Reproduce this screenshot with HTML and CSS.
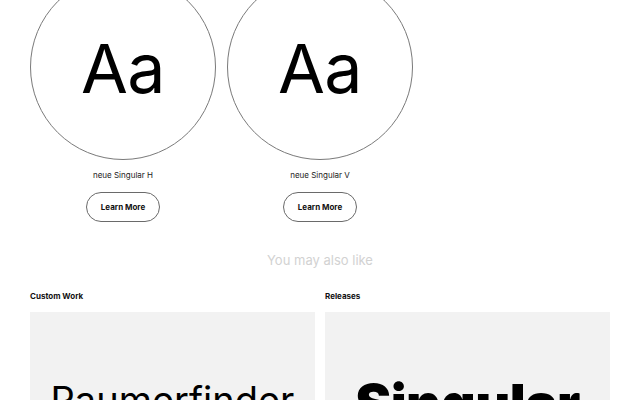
FILE: index.html
```html
<!DOCTYPE html>
<html>
<head>
<meta charset="utf-8">
<link rel="stylesheet" href="styles.css">
</head>
<body>
<main class="page">
  <section class="fonts">
    <div class="font-item">
      <div class="circle"><span class="sample">Aa</span></div>
      <p class="font-name">neue Singular H</p>
      <a class="btn" href="#">Learn More</a>
    </div>
    <div class="font-item">
      <div class="circle"><span class="sample">Aa</span></div>
      <p class="font-name">neue Singular V</p>
      <a class="btn" href="#">Learn More</a>
    </div>
  </section>
  <h2 class="also">You may also like</h2>
  <section class="related">
    <div class="rel">
      <h3 class="rel-title">Custom Work</h3>
      <div class="card"><span class="card-text light">Raumerfinder</span></div>
    </div>
    <div class="rel">
      <h3 class="rel-title">Releases</h3>
      <div class="card"><span class="card-text heavy">Singular</span></div>
    </div>
  </section>
</main>
</body>
</html>
```
FILE: styles.css
```css
* { box-sizing: border-box; }
html, body { margin: 0; padding: 0; background: #fff; }
body {
  font-family: Inter, "Liberation Sans", sans-serif;
  color: #111;
  overflow: hidden;
}
.page {
  padding: 0 30px;
}
.fonts {
  display: grid;
  grid-template-columns: repeat(3, 1fr);
  column-gap: 11px;
  margin-top: -26px;
}
.font-item {
  display: flex;
  flex-direction: column;
  align-items: center;
}
.circle {
  width: 100%;
  aspect-ratio: 1 / 1;
  border: 1px solid #7a7a7a;
  border-radius: 50%;
  display: flex;
  align-items: center;
  justify-content: center;
}
.sample {
  font-size: 68px;
  line-height: 1;
  font-weight: 400;
  color: #000;
  letter-spacing: -0.5px;
  margin-top: 2px;
}
.font-name {
  margin: 10px 0 0;
  font-size: 8px;
  line-height: 10px;
  color: #222;
}
.btn {
  margin-top: 12px;
  height: 30px;
  width: 74px;
  border: 1px solid #6a6a6a;
  border-radius: 15px;
  display: flex;
  align-items: center;
  justify-content: center;
  font-size: 8px;
  font-weight: 700;
  color: #111;
  text-decoration: none;
}
.also {
  margin: 30px 0 0;
  text-align: center;
  font-size: 13px;
  line-height: 16px;
  font-weight: 400;
  color: #d2d2d2;
}
.related {
  display: grid;
  grid-template-columns: 1fr 1fr;
  column-gap: 10px;
  margin-top: 23px;
}
.rel-title {
  margin: 0;
  font-size: 8px;
  line-height: 10px;
  font-weight: 700;
  color: #111;
}
.card {
  margin-top: 11px;
  height: 176px;
  background: #f2f2f2;
  display: flex;
  align-items: center;
  justify-content: center;
  overflow: hidden;
}
.card-text {
  color: #000;
  white-space: nowrap;
  line-height: 1;
}
.light {
  font-size: 38px;
  font-weight: 400;
}
.heavy {
  font-size: 54px;
  font-weight: 900;
  letter-spacing: -0.5px;
  margin-top: 8px;
}
```
